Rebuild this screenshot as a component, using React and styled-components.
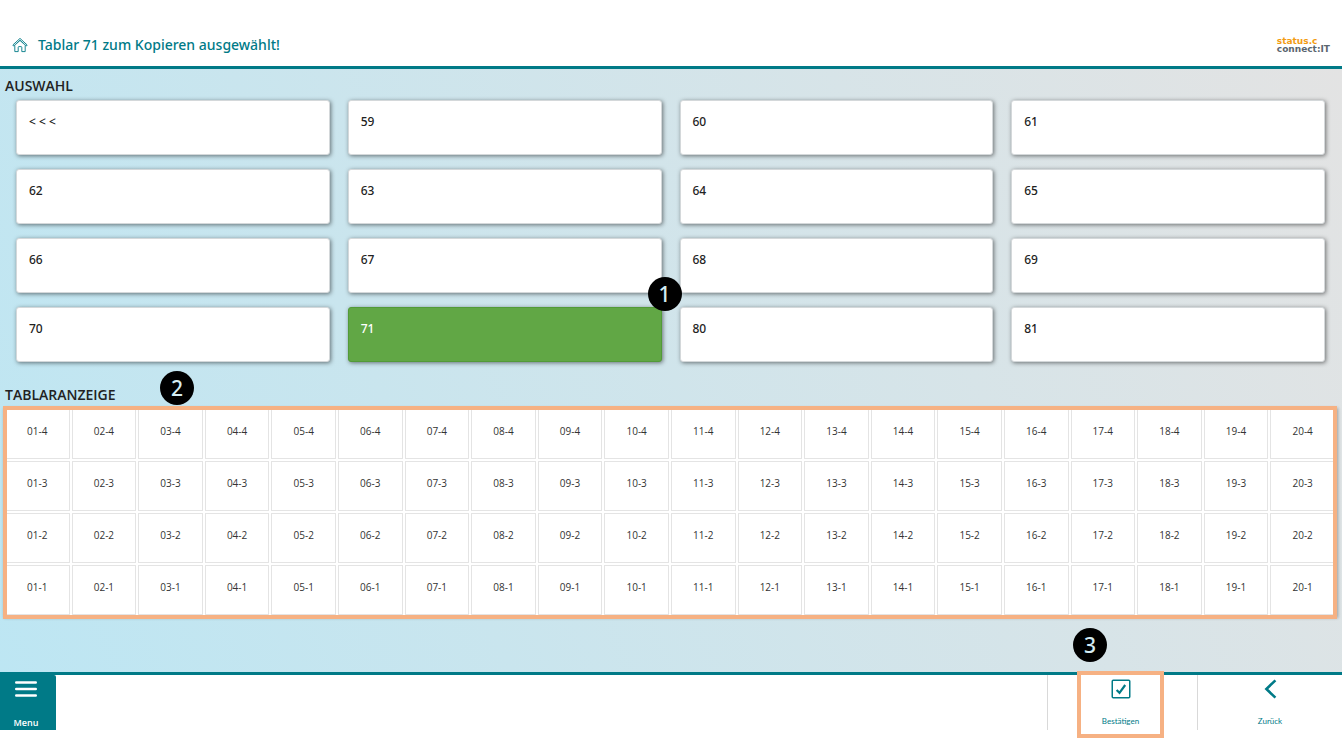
import React from "react";
import styled, { createGlobalStyle } from "styled-components";

const trays = ["< < <", "59", "60", "61", "62", "63", "64", "65", "66", "67", "68", "69", "70", "71", "80", "81"];
const selectedTray = "71";
const levels = [4, 3, 2, 1];
const slots = Array.from({ length: 20 }, (_, i) => String(i + 1).padStart(2, "0"));

const HomeIcon = () => (
  <svg width="16" height="16" viewBox="0 0 16 16" fill="none" stroke="currentColor" strokeWidth="0.9" strokeLinejoin="round">
    <path d="M8 1.4 L15.2 8 L14.3 9 L8 3.2 L1.7 9 L0.8 8 Z" />
    <path d="M2.8 8.4 V14.6 H6.2 V10.4 Q6.2 9.6 7 9.6 H9 Q9.8 9.6 9.8 10.4 V14.6 H13.2 V8.4" />
    <path d="M4.4 7 L8 3.8 L11.6 7" opacity="0.4" />
  </svg>
);

const MenuIcon = () => (
  <svg width="22" height="18" viewBox="0 0 22 18" fill="none" stroke="currentColor" strokeWidth="2.4" strokeLinecap="round">
    <path d="M1.2 2.5H20.8M1.2 9H20.8M1.2 15.5H20.8" />
  </svg>
);

const CheckIcon = () => (
  <svg width="20" height="20" viewBox="0 0 20 20" fill="none" stroke="currentColor">
    <rect x="1.25" y="1.25" width="17.5" height="17.5" rx="1" strokeWidth="1.5" />
    <path d="M5.6 11 L8.5 13.8 L14.2 6" strokeWidth="2.2" />
  </svg>
);

const BackIcon = () => (
  <svg width="20" height="20" viewBox="0 0 20 20" fill="none" stroke="currentColor" strokeWidth="2.6">
    <path d="M15.4 1.4 L6.4 10 L15.4 18.6" />
  </svg>
);

const App = () => {
  return (
    <Page>
      <GlobalStyle />
      <Header>
        <HomeLink href="#" aria-label="Home">
          <HomeIcon />
        </HomeLink>
        <Title>Tablar 71 zum Kopieren ausgewählt!</Title>
        <Brand>
          <BrandTop>status.c</BrandTop>
          <span>connect:IT</span>
        </Brand>
      </Header>
      <Main>
        <Heading>AUSWAHL</Heading>
        <TrayGrid>
          {trays.map((tray) => (
            <TrayItem key={tray}>
              <TrayButton type="button" $selected={tray === selectedTray}>
                {tray}
              </TrayButton>
              {tray === selectedTray && <TrayBadge>1</TrayBadge>}
            </TrayItem>
          ))}
        </TrayGrid>
        <Heading>
          TABLARANZEIGE
          <HeadingBadge>2</HeadingBadge>
        </Heading>
        <TrayView>
          <Table>
            <tbody>
              {levels.map((level) => (
                <tr key={level}>
                  {slots.map((slot) => (
                    <Cell key={slot}>{`${slot}-${level}`}</Cell>
                  ))}
                </tr>
              ))}
            </tbody>
          </Table>
        </TrayView>
      </Main>
      <Footer>
        <MenuButton type="button">
          <MenuIcon />
          Menu
        </MenuButton>
        <Actions>
          <ActionButton type="button" $width="150px">
            <CheckIcon />
            Bestätigen
            <Highlight />
            <ActionBadge>3</ActionBadge>
          </ActionButton>
          <ActionButton type="button" $width="145px">
            <BackIcon />
            Zurück
          </ActionButton>
        </Actions>
      </Footer>
    </Page>
  );
};

const GlobalStyle = createGlobalStyle`
  * {
    box-sizing: border-box;
  }
  body {
    margin: 0;
    background: #fff;
    color: #222;
    font-family: "Open Sans", "Noto Sans", sans-serif;
  }
  button {
    font-family: inherit;
    cursor: pointer;
  }
  svg {
    display: block;
  }
`;

const Page = styled.div`
  display: flex;
  flex-direction: column;
  min-height: 100vh;
`;

const Header = styled.header`
  display: flex;
  align-items: center;
  height: 69px;
  padding: 24px 12px 0;
  border-bottom: 3px solid #007a87;
`;

const HomeLink = styled.a`
  color: #007a87;
`;

const Title = styled.h1`
  margin: 0 0 0 10px;
  font-family: "Noto Sans", sans-serif;
  font-size: 14px;
  line-height: 20px;
  font-weight: 500;
  color: #007a87;
`;

const Brand = styled.div`
  display: flex;
  flex-direction: column;
  margin-left: auto;
  font-family: "DejaVu Sans", sans-serif;
  font-size: 9px;
  line-height: 8px;
  font-weight: 700;
  color: #5b6670;
`;

const BrandTop = styled.span`
  color: #f39c12;
`;

const Main = styled.main`
  flex: 1;
  padding: 7px 5px 52px 3px;
  background: linear-gradient(65deg, #bde6f3, #e3e3e3);
`;

const Heading = styled.h2`
  position: relative;
  margin: 0 2px;
  font-size: 14px;
  line-height: 20px;
  font-weight: 600;
`;

const TrayGrid = styled.ul`
  display: grid;
  grid-template-columns: repeat(4, 1fr);
  gap: 14px 18px;
  margin: 4px 12px 23px 13px;
  padding: 0;
  list-style: none;
`;

const TrayItem = styled.li`
  position: relative;
`;

const TrayButton = styled.button`
  display: flex;
  align-items: flex-start;
  width: 100%;
  height: 55px;
  padding: 12px;
  border: 1px solid ${(props) => (props.$selected ? "#529a38" : "#d4d8da")};
  border-radius: 3px;
  background: ${(props) => (props.$selected ? "#61a745" : "#fff")};
  box-shadow: 1px 1px 4px rgba(0, 0, 0, 0.5);
  color: ${(props) => (props.$selected ? "#fff" : "#222")};
  font-family: "Noto Sans", sans-serif;
  font-size: 12px;
  line-height: 18px;
  font-weight: 500;
`;

const Badge = styled.span`
  position: absolute;
  z-index: 1;
  display: flex;
  align-items: center;
  justify-content: center;
  width: 34px;
  height: 34px;
  border-radius: 50%;
  background: #000;
  color: #d5edf4;
  font-family: "Noto Sans", sans-serif;
  font-size: 21px;
  line-height: 24px;
  font-weight: 500;
`;

const TrayBadge = styled(Badge)`
  top: -30px;
  right: -20px;
`;

const HeadingBadge = styled(Badge)`
  top: -14px;
  left: 155px;
`;

const TrayView = styled.div`
  position: relative;
  margin-top: 2px;
  background: #fff;
  box-shadow: 1px 1px 3px rgba(0, 0, 0, 0.3);

  &::after {
    content: "";
    position: absolute;
    inset: -1px 0 -2px;
    border: 4px solid #f6b183;
    pointer-events: none;
  }
`;

const Table = styled.table`
  width: 100%;
  table-layout: fixed;
  border-collapse: separate;
  border-spacing: 2px;
`;

const Cell = styled.td`
  height: 50px;
  padding: 0 0 6px;
  border: 1px solid #e4e4e4;
  font-size: 10px;
  line-height: 14px;
  text-align: center;
  vertical-align: middle;
  color: #333;
`;

const Footer = styled.footer`
  display: flex;
  justify-content: space-between;
  padding-bottom: 23px;
  border-top: 3px solid #007a87;
  background: #fff;
`;

const MenuButton = styled.button`
  display: flex;
  flex-direction: column;
  align-items: center;
  justify-content: space-between;
  width: 56px;
  height: 55px;
  padding: 5px 4px 0 0;
  border: 0;
  border-radius: 0 2px 0 0;
  background: #007a87;
  color: #fff;
  font-size: 9px;
  line-height: 14px;
  font-weight: 600;
`;

const Actions = styled.div`
  display: flex;
`;

const ActionButton = styled.button`
  position: relative;
  display: flex;
  flex-direction: column;
  align-items: center;
  justify-content: space-between;
  width: ${(props) => props.$width};
  height: 55px;
  padding: 4px 4px 3px 0;
  border: 0;
  border-left: 1px solid #d9d9d9;
  background: none;
  color: #007a87;
  font-family: Lato, sans-serif;
  font-size: 8px;
  line-height: 12px;

  &:last-child {
    padding-right: 0;
  }
`;

const Highlight = styled.span`
  position: absolute;
  top: -4px;
  left: 29px;
  width: 87px;
  height: 67px;
  border: 4px solid #f6b183;
`;

const ActionBadge = styled(Badge)`
  top: -47px;
  left: 25px;
`;

export default App;
